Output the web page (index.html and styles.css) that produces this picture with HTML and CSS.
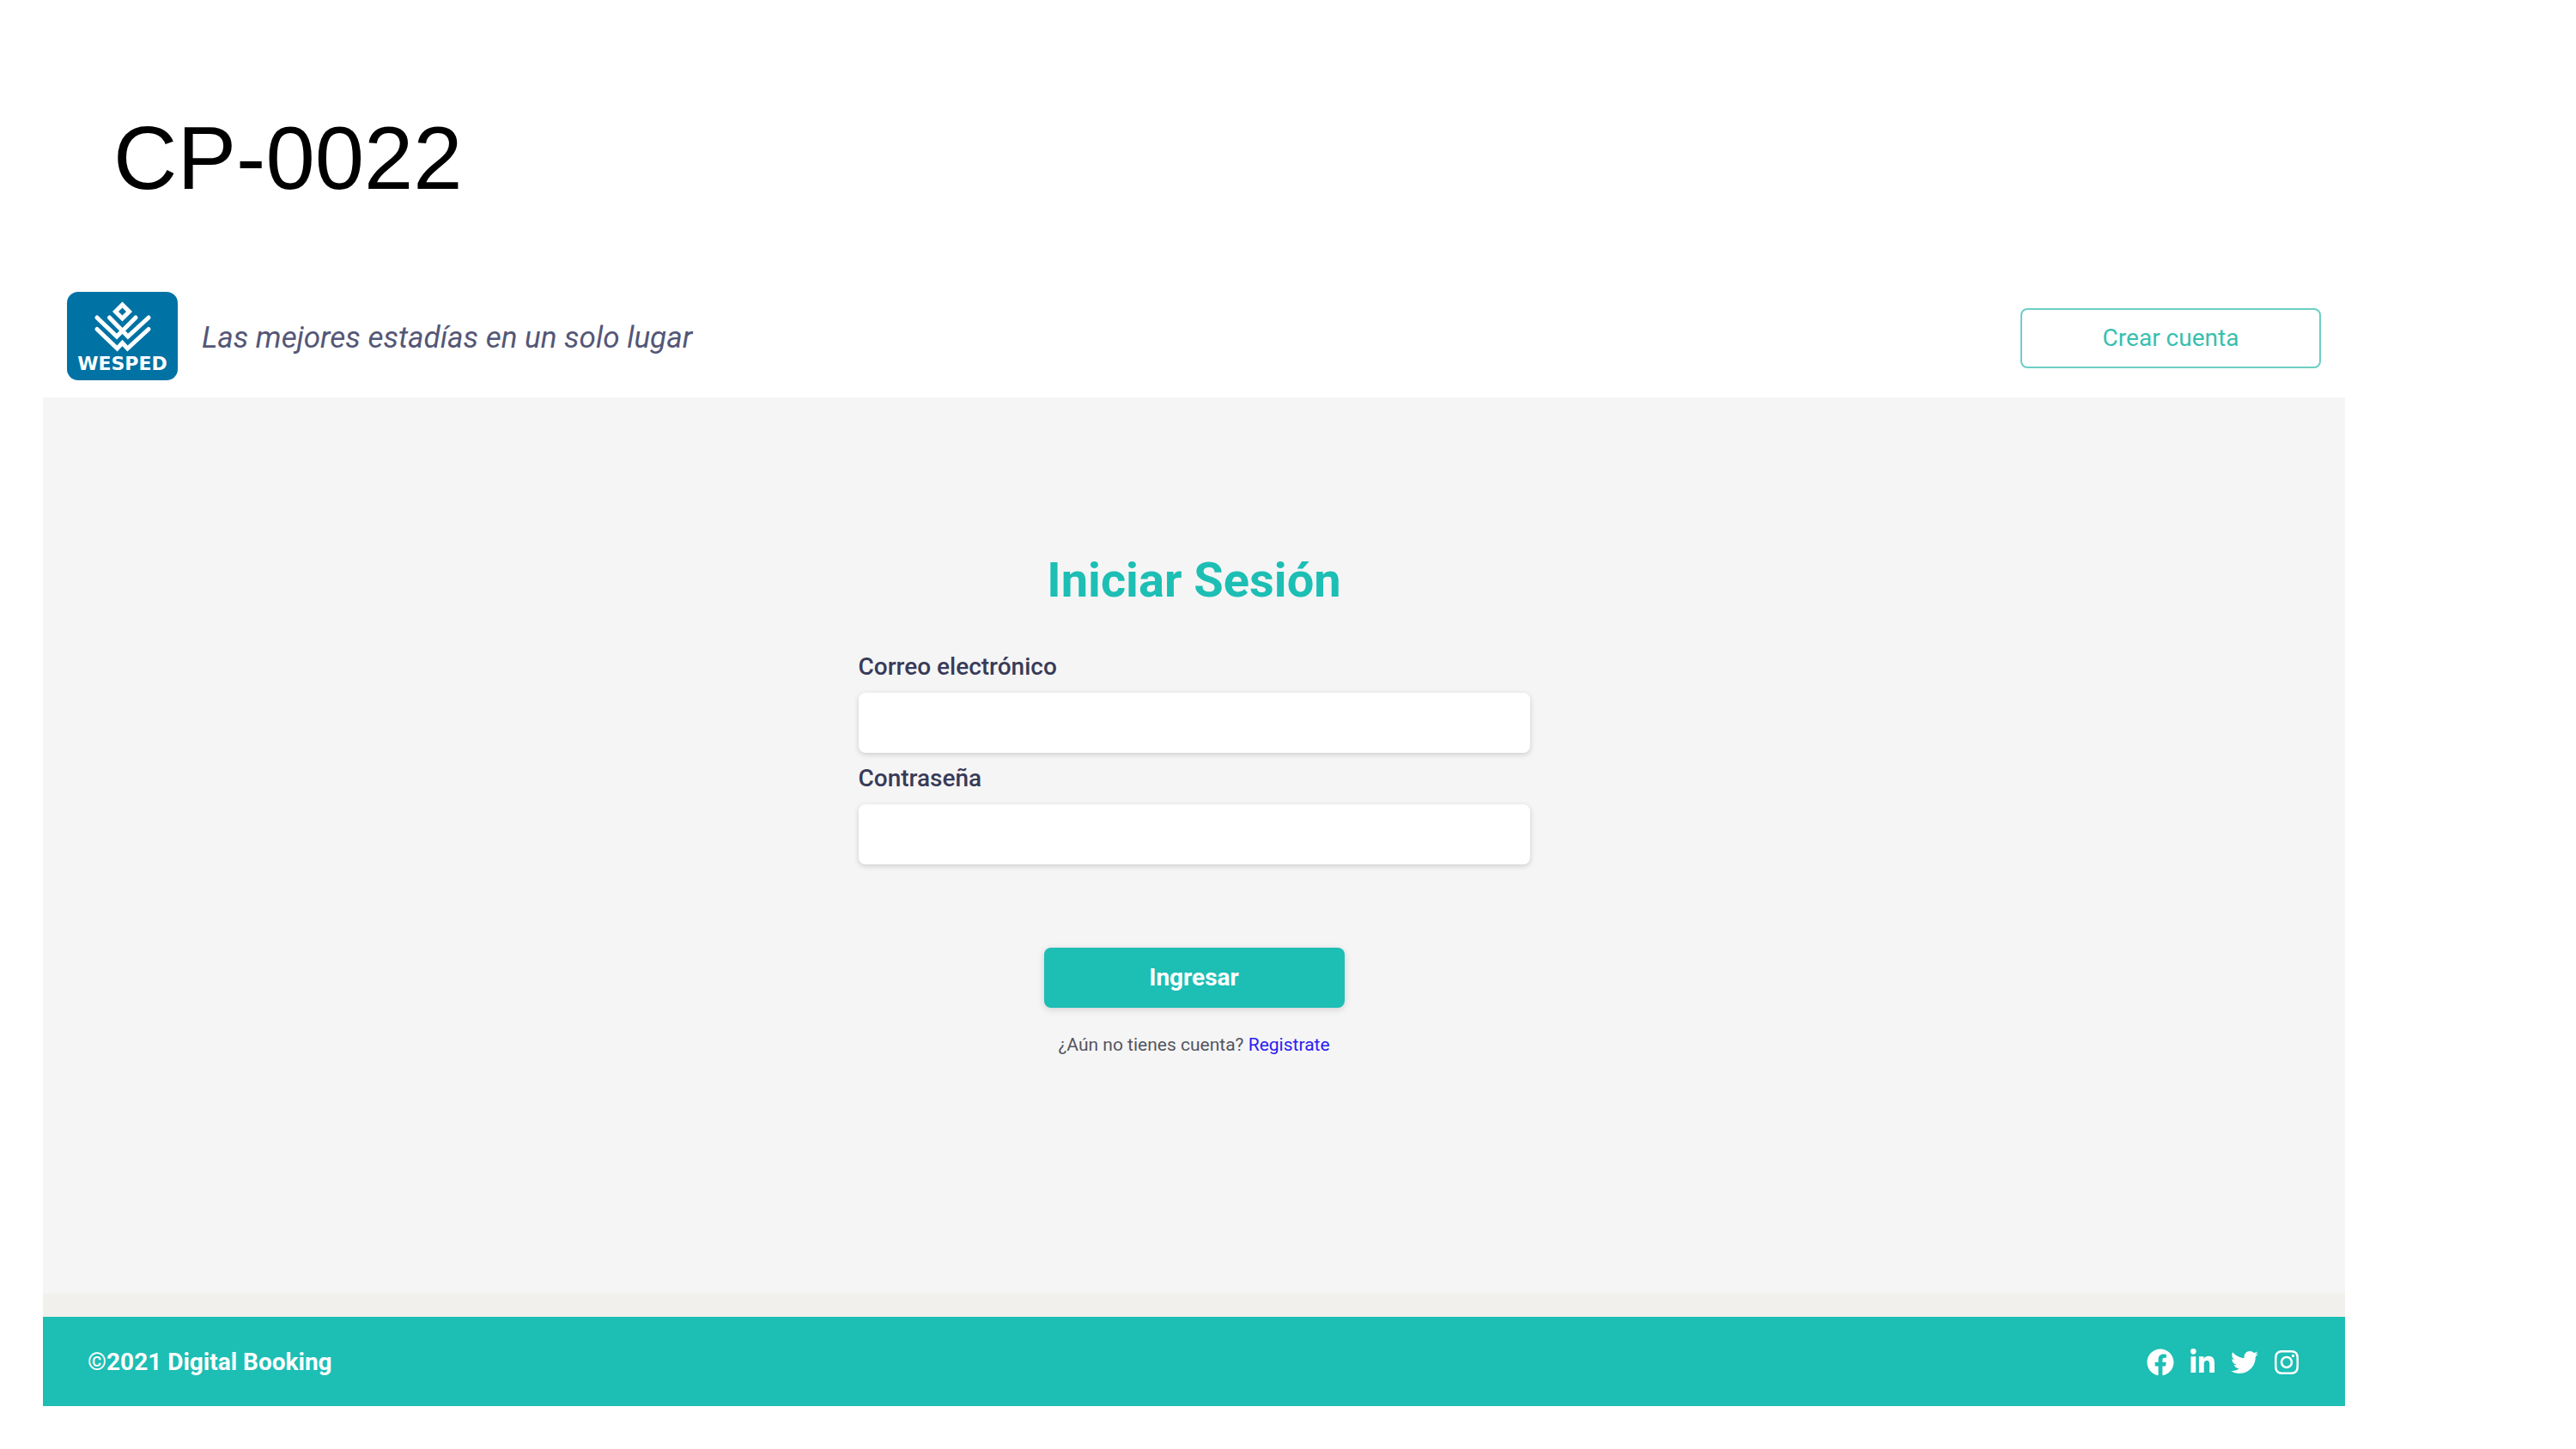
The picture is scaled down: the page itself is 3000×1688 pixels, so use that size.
FILE: index.html
```html
<!DOCTYPE html>
<html lang="es">
<head>
<meta charset="utf-8">
<meta name="viewport" content="width=device-width, initial-scale=1">
<title>CP-0022</title>
<link rel="stylesheet" href="styles.css">
</head>
<body>
<h1 class="case-title">CP-0022</h1>
<div class="app">
  <header class="header">
    <a class="brand" href="#">
      <svg class="logo" viewBox="0 0 129 103" role="img" aria-label="Wesped">
        <rect class="logo-bg" width="129" height="103" rx="13"/>
        <g class="logo-mark">
          <path d="M64.500 15 L72.500 23 L64.500 31 L56.500 23 Z"/>
          <path d="M35 30 L58 52 L80 30"/>
          <path d="M49.500 30 L71 52 L95 30"/>
          <path d="M35 43.500 L58.500 66 L64.500 59.500 L70.500 66 L95 43.500"/>
        </g>
        <text class="logo-name" x="64.500" y="91" text-anchor="middle">WESPED</text>
      </svg>
      <span class="tagline">Las mejores estadías en un solo lugar</span>
    </a>
    <button class="button button-outline" type="button">Crear cuenta</button>
  </header>
  <main class="main">
    <form class="login">
      <h2 class="login-title">Iniciar Sesión</h2>
      <label class="label" for="email">Correo electrónico</label>
      <input class="input" id="email" type="email">
      <label class="label" for="password">Contraseña</label>
      <input class="input" id="password" type="password">
      <button class="button button-solid" type="submit">Ingresar</button>
      <p class="signup">¿Aún no tienes cuenta? <a class="signup-link" href="#">Registrate</a></p>
    </form>
  </main>
  <footer class="footer">
    <span>©2021 Digital Booking</span>
    <nav class="social" aria-label="Redes sociales">
      <a class="social-link" href="#" aria-label="Facebook"><svg class="icon" viewBox="0 0 512 512"><path d="M504 256C504 119 393 8 256 8S8 119 8 256c0 123.780 90.690 226.380 209.250 245V327.690h-63V256h63v-54.640c0-62.150 37-96.480 93.670-96.480 27.140 0 55.520 4.840 55.520 4.840v61h-31.280c-30.800 0-40.410 19.120-40.410 38.730V256h68.780l-11 71.690h-57.780V501C413.310 482.380 504 379.780 504 256z"/></svg></a>
      <a class="social-link" href="#" aria-label="LinkedIn"><svg class="icon" viewBox="0 0 448 512"><path d="M100.280 448H7.400V148.900h92.880zM53.790 108.100C24.090 108.100 0 83.500 0 53.800a53.790 53.790 0 0 1 107.580 0c0 29.700-24.100 54.300-53.790 54.300zM447.900 448h-92.680V302.400c0-34.700-.7-79.200-48.290-79.200-48.290 0-55.690 37.700-55.690 76.700V448h-92.780V148.900h89.080v40.800h1.300c12.400-23.500 42.690-48.300 87.880-48.300 94 0 111.280 61.900 111.280 142.300V448z"/></svg></a>
      <a class="social-link" href="#" aria-label="Twitter"><svg class="icon" viewBox="0 0 512 512"><path d="M459.370 151.716c.325 4.548.325 9.097.325 13.645 0 138.720-105.583 298.558-298.558 298.558-59.452 0-114.680-17.219-161.137-47.106 8.447.974 16.568 1.299 25.340 1.299 49.055 0 94.213-16.568 130.274-44.832-46.132-.975-84.792-31.188-98.112-72.772 6.498.974 12.995 1.624 19.818 1.624 9.421 0 18.843-1.300 27.614-3.573-48.081-9.747-84.143-51.980-84.143-102.985v-1.299c13.969 7.797 30.214 12.670 47.431 13.319-28.264-18.843-46.781-51.005-46.781-87.391 0-19.492 5.197-37.360 14.294-52.954 51.655 63.675 129.300 105.258 216.365 109.807-1.624-7.797-2.599-15.918-2.599-24.040 0-57.828 46.782-104.934 104.934-104.934 30.213 0 57.502 12.670 76.670 33.137 23.715-4.548 46.456-13.320 66.599-25.340-7.798 24.366-24.366 44.833-46.132 57.827 21.117-2.273 41.584-8.122 60.426-16.243-14.292 20.791-32.161 39.308-52.628 54.253z"/></svg></a>
      <a class="social-link" href="#" aria-label="Instagram"><svg class="icon" viewBox="0 0 448 512"><path d="M224.100 141c-63.600 0-114.900 51.300-114.900 114.900s51.300 114.900 114.900 114.900S339 319.500 339 255.900 287.700 141 224.100 141zm0 189.600c-41.100 0-74.700-33.500-74.700-74.700s33.500-74.700 74.700-74.700 74.700 33.500 74.700 74.700-33.600 74.700-74.700 74.700zm146.400-194.300c0 14.900-12 26.800-26.800 26.800-14.900 0-26.800-12-26.800-26.800s12-26.800 26.800-26.800 26.800 12 26.800 26.800zm76.100 27.200c-1.700-35.900-9.900-67.700-36.200-93.900-26.200-26.200-58-34.400-93.900-36.200-37-2.100-147.900-2.100-184.900 0-35.800 1.700-67.600 9.900-93.900 36.100s-34.400 58-36.200 93.900c-2.100 37-2.100 147.900 0 184.900 1.700 35.900 9.900 67.700 36.200 93.900s58 34.400 93.900 36.200c37 2.100 147.900 2.100 184.900 0 35.900-1.700 67.700-9.900 93.900-36.200 26.200-26.200 34.400-58 36.200-93.900 2.100-37 2.100-147.800 0-184.800zM398.800 388c-7.800 19.600-22.900 34.700-42.600 42.600-29.500 11.700-99.500 9-132.100 9s-102.700 2.600-132.100-9c-19.600-7.800-34.700-22.900-42.600-42.600-11.700-29.500-9-99.500-9-132.100s-2.600-102.700 9-132.100c7.800-19.600 22.900-34.700 42.600-42.600 29.500-11.700 99.500-9 132.100-9s102.700-2.600 132.100 9c19.600 7.800 34.700 22.900 42.600 42.600 11.700 29.500 9 99.500 9 132.100s2.700 102.700-9 132.100z"/></svg></a>
    </nav>
  </footer>
</div>
</body>
</html>
```
FILE: styles.css
```css
* {
  box-sizing: border-box;
}

body {
  display: flex;
  flex-direction: column;
  min-height: 100vh;
  margin: 0;
  padding: 125px 269px 50px 50px;
  background: #fff;
  color: #383b58;
  font-family: Roboto, "Liberation Sans", sans-serif;
  font-size: 28px;
  line-height: 32px;
}

.case-title {
  margin: 0 0 75px;
  padding-left: 82px;
  color: #000;
  font: 400 103px/120px "Liberation Sans", Arial, sans-serif;
}

.app {
  display: flex;
  flex: 1;
  flex-direction: column;
}

.header {
  display: flex;
  align-items: center;
  justify-content: space-between;
  padding: 20px 28px 15px;
}

.brand {
  display: flex;
  align-items: center;
  gap: 28px;
  color: #545776;
  text-decoration: none;
}

.logo {
  display: block;
  width: 129px;
  height: 103px;
  margin-bottom: 5px;
}

.logo-bg {
  fill: #0072a3;
}

.logo-mark {
  fill: none;
  stroke: #fff;
  stroke-linecap: round;
  stroke-width: 5px;
}

.logo-name {
  fill: #fff;
  font: 700 22px "DejaVu Sans", sans-serif;
}

.tagline {
  font-size: 35px;
  font-style: italic;
  line-height: 40px;
}

.button {
  width: 350px;
  height: 70px;
  border: 0;
  border-radius: 8px;
  font: 400 28px/32px Roboto, "Liberation Sans", sans-serif;
  cursor: pointer;
}

.button-outline {
  border: 2px solid #6ccfc5;
  background: #fff;
  color: #38bfb0;
}

.button-solid {
  align-self: center;
  margin-top: 83px;
  background: #1dbeb4;
  box-shadow: 0 2px 8px rgba(0, 0, 0, 0.15);
  color: #fff;
  font-weight: 700;
}

.main {
  display: flex;
  flex: 1;
  justify-content: center;
  padding: 181px 28px 60px;
  border-bottom: 27px solid #f1f0ec;
  background: #f5f5f5;
}

.login {
  display: flex;
  flex-direction: column;
  width: 782px;
}

.login-title {
  margin: 0 0 53px;
  color: #1dbeb4;
  font-size: 56px;
  font-weight: 700;
  line-height: 64px;
  text-align: center;
}

.label {
  margin-bottom: 14px;
  font-weight: 500;
}

.input {
  height: 70px;
  margin-bottom: 14px;
  padding: 0 20px;
  border: 0;
  border-radius: 8px;
  background: #fff;
  box-shadow: 0 2px 6px rgba(0, 0, 0, 0.17);
  font: inherit;
}

.signup {
  margin: 27px 0 0;
  color: #545560;
  font-size: 21px;
  text-align: center;
}

.signup-link {
  color: #2a20f0;
  text-decoration: none;
}

.footer {
  display: flex;
  align-items: center;
  justify-content: space-between;
  height: 104px;
  padding: 2px 52px 0;
  background: #1dbeb4;
  color: #fff;
  font-weight: 700;
}

.social {
  display: flex;
  gap: 17px;
}

.social-link {
  color: inherit;
}

.icon {
  display: block;
  width: 32px;
  height: 32px;
  fill: currentColor;
}
```
